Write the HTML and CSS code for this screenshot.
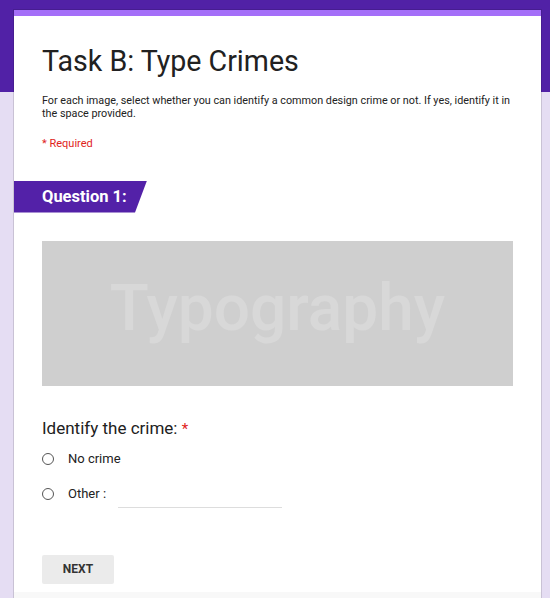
FILE: index.html
```html
<!DOCTYPE html>
<html lang="en">
<head>
    <meta charset="UTF-8">
    <meta name="viewport" content="width=device-width, initial-scale=1.0">
    <title>Task B: Type Crimes</title>
    <link rel="stylesheet" href="styles.css">
</head>
<body>

<div class="form-card">
    <div class="form-body">
        <h1>Task B: Type Crimes</h1>
        <p class="intro">For each image, select whether you can identify a common design crime or not. If yes, identify it in the space provided.</p>
        <p class="required-note">* Required</p>
    </div>

    <div class="question-banner">Question 1:</div>

    <div class="form-body">
        <div class="question-image">Typography</div>

        <h2 class="question-title">Identify the crime: <span class="star">*</span></h2>

        <label class="choice">
            <span class="radio"></span>
            <span>No crime</span>
        </label>
        <label class="choice">
            <span class="radio"></span>
            <span>Other :</span>
            <input type="text" class="other-input">
        </label>

        <button class="next-btn">NEXT</button>
    </div>

    <div class="form-footer"></div>
</div>

</body>
</html>
```

FILE: styles.css
```css
* {
    margin: 0;
    padding: 0;
    box-sizing: border-box;
}

body {
    font-family: Roboto, 'Liberation Sans', sans-serif;
    color: #212121;
    background: linear-gradient(#5121a6 0, #5121a6 92px, #e5ddf3 92px);
    height: 598px;
    overflow: hidden;
    padding: 10px 0 0 14px;
}

.form-card {
    width: 527px;
    background-color: #fff;
    border-top: 6px solid #a46ef8;
    box-shadow: 0 0 0 1px rgba(0, 0, 0, 0.12);
}

.form-body {
    padding: 0 28px;
}

h1 {
    font-size: 28.6px;
    font-weight: 400;
    line-height: 36px;
    padding-top: 27px;
    color: #212121;
}

.intro {
    font-size: 10.8px;
    line-height: 12.5px;
    margin-top: 16px;
    color: #222;
}

.required-note {
    font-size: 11px;
    line-height: 12.5px;
    margin-top: 18px;
    color: #e0231b;
}

.question-banner {
    margin-top: 30px;
    width: 133px;
    height: 32px;
    line-height: 32px;
    padding-left: 28px;
    background-color: #5321a8;
    color: #fff;
    font-size: 16.5px;
    font-weight: 700;
    clip-path: polygon(0 0, 100% 0, calc(100% - 12px) 100%, 0 100%);
}

.question-image {
    margin-top: 28px;
    height: 145px;
    padding-bottom: 10px;
    background-color: #cfcfcf;
    color: #d8d8d8;
    font-size: 64px;
    font-weight: 500;
    display: flex;
    align-items: center;
    justify-content: center;
}

.question-title {
    margin-top: 32px;
    font-size: 17px;
    font-weight: 400;
    line-height: 20px;
}

.star {
    color: #e0231b;
    font-size: 15px;
}

.choice {
    display: flex;
    align-items: center;
    height: 28px;
    font-size: 13px;
    color: #222;
}

.choice + .choice {
    margin-top: 7px;
}

.question-title + .choice {
    margin-top: 6px;
}

.radio {
    width: 12px;
    height: 12px;
    border: 1px solid #555;
    border-radius: 50%;
    margin-right: 14px;
}

.other-input {
    margin-left: 12px;
    width: 164px;
    height: 28px;
    border: none;
    border-bottom: 1px solid #ddd;
    outline: none;
    font-family: inherit;
}

.next-btn {
    display: block;
    margin-top: 47px;
    width: 72px;
    height: 29px;
    background-color: #ebebeb;
    border: none;
    border-radius: 2px;
    font-family: inherit;
    font-size: 12px;
    font-weight: 700;
    color: #333;
}

.form-footer {
    margin-top: 8px;
    height: 6px;
    background-color: #f8f8f8;
}
```
